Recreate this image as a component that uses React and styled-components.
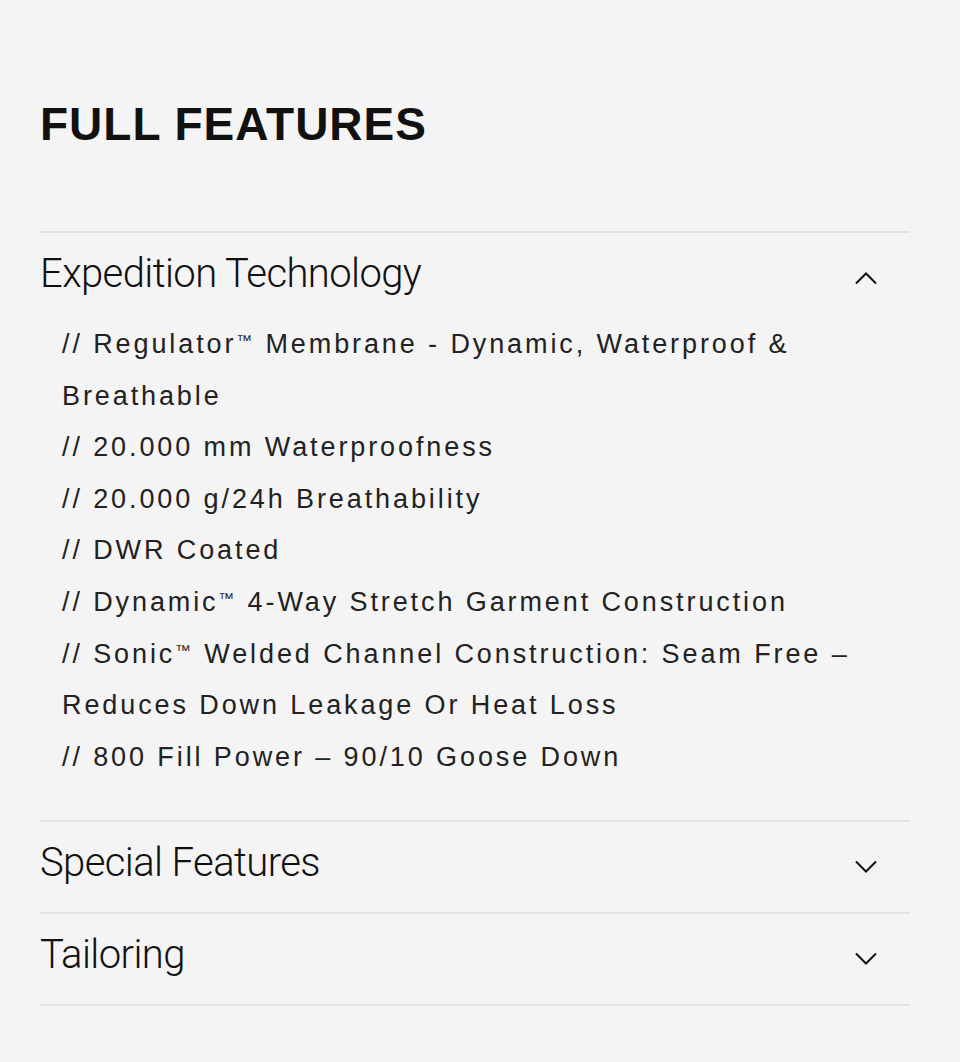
import React, { useState } from 'react';
import styled, { createGlobalStyle } from 'styled-components';

const GlobalStyle = createGlobalStyle`
  body {
    margin: 0;
    background: #f4f4f4;
    font-family: "Liberation Sans", Arial, sans-serif;
    color: #111;
  }
`;

const Page = styled.div`
  padding: 101px 50px 60px 40px;
`;

const Heading = styled.h2`
  margin: 0 0 84px;
  font-size: 46px;
  line-height: 46px;
  font-weight: 700;
  letter-spacing: 1px;
  color: #111;
`;

const Accordion = styled.div`
  border-top: 2px solid #e2e2e2;
`;

const Item = styled.div`
  border-bottom: 2px solid #e2e2e2;
`;

const Header = styled.div`
  display: flex;
  justify-content: space-between;
  align-items: center;
  height: 90px;
  cursor: pointer;
`;

const Title = styled.span`
  font-family: Roboto, "Liberation Sans", sans-serif;
  font-weight: 300;
  font-size: 40px;
  line-height: 42px;
  letter-spacing: -0.6px;
  margin-bottom: 8px;
  color: #111;
`;

const Chevron = styled.svg`
  width: 24px;
  height: 14px;
  margin-right: 32px;
  flex-shrink: 0;
`;

const List = styled.ul`
  list-style: none;
  margin: -4px 0 0;
  padding: 0 30px 37px 22px;
`;

const Line = styled.li`
  font-size: 27px;
  line-height: 51.6px;
  letter-spacing: 2.9px;
  color: #222;
`;

const Tm = styled.span`
  font-size: 0.58em;
  letter-spacing: 0;
  vertical-align: 7px;
  line-height: 1;
  margin-right: 3px;
`;

const sections = [
  {
    title: 'Expedition Technology',
    items: [
      '// Regulator™ Membrane - Dynamic, Waterproof & Breathable',
      '// 20.000 mm Waterproofness',
      '// 20.000 g/24h Breathability',
      '// DWR Coated',
      '// Dynamic™ 4-Way Stretch Garment Construction',
      '// Sonic™ Welded Channel Construction: Seam Free – Reduces Down Leakage Or Heat Loss',
      '// 800 Fill Power – 90/10 Goose Down',
    ],
  },
  { title: 'Special Features', items: [] },
  { title: 'Tailoring', items: [] },
];

function Arrow({ up }) {
  return (
    <Chevron viewBox="0 0 24 14" fill="none" stroke="#111" strokeWidth="2">
      {up ? <polyline points="2,12.5 12,2.5 22,12.5" /> : <polyline points="2,1.5 12,11.5 22,1.5" />}
    </Chevron>
  );
}

// the ™ is set small and raised, as on the product page
function withTm(text) {
  const parts = text.split('™');
  return parts.map((p, i) => (
    <React.Fragment key={i}>
      {p}
      {i < parts.length - 1 && <Tm>™</Tm>}
    </React.Fragment>
  ));
}

export default function App() {
  const [open, setOpen] = useState(0);
  return (
    <Page>
      <GlobalStyle />
      <Heading>FULL FEATURES</Heading>
      <Accordion>
        {sections.map((s, i) => (
          <Item key={s.title}>
            <Header onClick={() => setOpen(open === i ? -1 : i)}>
              <Title>{s.title}</Title>
              <Arrow up={open === i} />
            </Header>
            {open === i && (
              <List>
                {s.items.map((t) => (
                  <Line key={t}>{withTm(t)}</Line>
                ))}
              </List>
            )}
          </Item>
        ))}
      </Accordion>
    </Page>
  );
}
